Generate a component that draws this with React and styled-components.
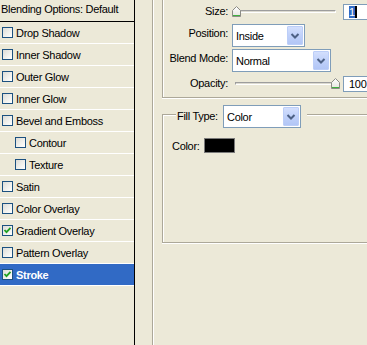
import React from 'react';
import styled, { createGlobalStyle } from 'styled-components';

const Global = createGlobalStyle`
  html, body { margin: 0; padding: 0; background: #ECE9D8; }
  body {
    width: 367px; height: 345px; overflow: hidden;
    font-family: "Liberation Sans", Arial, sans-serif;
    font-size: 11px; color: #000;
    letter-spacing: -0.3px;
  }
`;

const GRAY = '#ACA899';

const Window = styled.div`
  display: flex;
  width: 367px;
  height: 345px;
  overflow: hidden;
  background: #ECE9D8;
`;

const StyleList = styled.div`
  width: 134px;
  flex: none;
  border-right: 1px solid #000;
  display: flex;
  flex-direction: column;
`;

const ListHeader = styled.div`
  height: 22px;
  box-sizing: border-box;
  border-bottom: 1px solid #000;
  display: flex;
  align-items: center;
  padding: 0 0 3px 1px;
  white-space: nowrap;
`;

const ListRow = styled.div`
  height: 22px;
  box-sizing: border-box;
  border-bottom: 1px solid #fff;
  display: flex;
  align-items: center;
  gap: 3px;
  padding-left: ${p => (p.$indent ? 15 : 2)}px;
  background: ${p => (p.$selected ? '#316AC5' : 'transparent')};
  color: ${p => (p.$selected ? '#fff' : '#000')};
  font-weight: ${p => (p.$selected ? 'bold' : 'normal')};
  white-space: nowrap;
`;

const CheckBox = styled.span`
  width: 11px;
  height: 11px;
  box-sizing: border-box;
  flex: none;
  border: 1px solid #1C5180;
  background: linear-gradient(135deg, #DCDCD7 0%, #F2F2EE 60%, #FFFFFF 100%);
  display: flex;
  align-items: center;
  justify-content: center;
`;

const Main = styled.div`
  flex: 1;
  padding-left: 17px;
  overflow: hidden;
  display: flex;
`;

const StylesFrame = styled.div`
  width: 300px;
  flex: none;
  border-left: 1px solid ${GRAY};
  box-shadow: inset 1px 0 0 #fff;
  padding-left: 9px;
  display: flex;
  flex-direction: column;
`;

const StructureGroup = styled.div`
  width: 290px;
  height: 98px;
  box-sizing: border-box;
  border-left: 1px solid ${GRAY};
  border-bottom: 1px solid ${GRAY};
  box-shadow: inset 1px 0 0 #fff, 0 1px 0 #fff;
  padding: 3px 0 5px 0;
  display: flex;
  flex-direction: column;
`;

const FieldRow = styled.div`
  display: flex;
  align-items: center;
  height: ${p => p.$h}px;
  margin-top: ${p => p.$mt || 0}px;
  flex: none;
`;

const FieldLabel = styled.span`
  width: 65px;
  flex: none;
  text-align: right;
  margin-right: 4px;
  margin-bottom: ${p => (p.$lift || 0) * 2}px;
  white-space: nowrap;
`;

const SliderBox = styled.div`
  position: relative;
  width: 108px;
  height: 11px;
  flex: none;
  box-sizing: border-box;
  padding: 0 4px 0 3px;
  display: flex;
  align-items: center;
`;

const Track = styled.div`
  flex: 1;
  height: 3px;
  box-sizing: border-box;
  border-top: 1px solid #9D9D9D;
  border-left: 1px solid #9D9D9D;
  border-bottom: 1px solid #fff;
  border-right: 1px solid #fff;
  background: #DCDAD0;
`;

const ThumbWrap = styled.div`
  position: absolute;
  top: 0;
  width: 9px;
  height: 11px;
  display: flex;
`;

const TextBox = styled.div`
  width: 40px;
  height: 16px;
  box-sizing: border-box;
  margin-left: 3px;
  flex: none;
  border: 1px solid #7F9DB9;
  background: #fff;
  display: flex;
  align-items: center;
  padding-left: 5px;
`;

const SelectedText = styled.span`
  background: #316AC5;
  color: #fff;
  line-height: 12px;
  letter-spacing: 0;
`;

const Caret = styled.span`
  width: 2px;
  height: 12px;
  background: #000;
`;

const SelectBox = styled.div`
  width: ${p => p.$w}px;
  height: 23px;
  box-sizing: border-box;
  flex: none;
  border: 1px solid #7F9DB9;
  background: #fff;
  padding: 1px;
  display: flex;
  align-items: stretch;
`;

const SelectValue = styled.span`
  flex: 1;
  display: flex;
  align-items: center;
  padding-left: 2px;
  white-space: nowrap;
`;

const DropButton = styled.span`
  width: 16px;
  flex: none;
  box-sizing: border-box;
  border: 1px solid #BCCEF8;
  border-radius: 1px;
  background: linear-gradient(180deg, #D3DFFD 0%, #C0D1FA 50%, #B2C6F6 100%);
  display: flex;
  align-items: center;
  justify-content: center;
`;

const FillGroup = styled.div`
  width: 290px;
  height: 129px;
  box-sizing: border-box;
  margin-top: 16px;
  border: 1px solid ${GRAY};
  box-shadow: inset 1px 1px 0 #fff, 0 1px 0 #fff;
  display: flex;
  flex-direction: column;
`;

const Legend = styled.div`
  align-self: flex-start;
  height: 23px;
  margin: -10px 0 0 13px;
  padding: 0 6px 0 1px;
  background: #ECE9D8;
  display: flex;
  align-items: center;
`;

const LegendLabel = styled.span`
  width: 41px;
  margin-right: 5px;
  margin-bottom: 2px;
  white-space: nowrap;
`;

const ColorRow = styled.div`
  margin-top: 10px;
  padding-left: 9px;
  display: flex;
  align-items: center;
  gap: 5px;
`;

const ColorLabel = styled.span`
  width: 27px;
  white-space: nowrap;
`;

const Swatch = styled.span`
  width: 31px;
  height: 15px;
  box-sizing: border-box;
  border: 1px solid #7A7A7A;
  background: #000;
`;

const Check = () => (
  <svg width="9" height="9" viewBox="0 0 9 9">
    <polyline points="1.5,4 3.5,6.2 7.5,1.8" fill="none" stroke="#21A121" strokeWidth="1.8" />
  </svg>
);

const Chevron = () => (
  <svg width="10" height="8" viewBox="0 0 10 8">
    <polyline points="1.5,2 5,5.5 8.5,2" fill="none" stroke="#4D6185" strokeWidth="2" />
  </svg>
);

const Thumb = () => (
  <svg width="9" height="11" viewBox="0 0 9 11">
    <defs>
      <linearGradient id="tg" x1="0" y1="0" x2="0" y2="1">
        <stop offset="0" stopColor="#FFFFFF" />
        <stop offset="1" stopColor="#E4E4DE" />
      </linearGradient>
    </defs>
    <path d="M0.5 4.5 L4.5 0.5 L8.5 4.5 V10.5 H0.5 Z" fill="url(#tg)" stroke="#8C8C86" strokeWidth="1" />
    <line x1="1" y1="9.5" x2="8" y2="9.5" stroke="#3FB13F" strokeWidth="1" />
  </svg>
);

const Slider = ({ pct }) => (
  <SliderBox>
    <Track />
    <ThumbWrap style={{ left: `${pct * 99}px` }}>
      <Thumb />
    </ThumbWrap>
  </SliderBox>
);

const Select = ({ w, value }) => (
  <SelectBox $w={w}>
    <SelectValue>{value}</SelectValue>
    <DropButton><Chevron /></DropButton>
  </SelectBox>
);

const items = [
  { label: 'Drop Shadow' },
  { label: 'Inner Shadow' },
  { label: 'Outer Glow' },
  { label: 'Inner Glow' },
  { label: 'Bevel and Emboss' },
  { label: 'Contour', indent: true },
  { label: 'Texture', indent: true },
  { label: 'Satin' },
  { label: 'Color Overlay' },
  { label: 'Gradient Overlay', checked: true },
  { label: 'Pattern Overlay' },
  { label: 'Stroke', checked: true, selected: true },
];

export default function App() {
  return (
    <>
      <Global />
      <Window>
        <StyleList>
          <ListHeader>Blending Options: Default</ListHeader>
          {items.map(it => (
            <ListRow key={it.label} $indent={it.indent} $selected={it.selected}>
              <CheckBox>{it.checked && <Check />}</CheckBox>
              <span>{it.label}</span>
            </ListRow>
          ))}
        </StyleList>
        <Main>
          <StylesFrame>
            <StructureGroup>
              <FieldRow $h={17}>
                <FieldLabel $lift={1}>Size:</FieldLabel>
                <Slider pct={0} />
                <TextBox><SelectedText>1</SelectedText><Caret /></TextBox>
              </FieldRow>
              <FieldRow $h={23} $mt={4}>
                <FieldLabel $lift={3}>Position:</FieldLabel>
                <Select w={73} value="Inside" />
              </FieldRow>
              <FieldRow $h={23} $mt={2}>
                <FieldLabel $lift={3}>Blend Mode:</FieldLabel>
                <Select w={99} value="Normal" />
              </FieldRow>
              <FieldRow $h={17} $mt={3}>
                <FieldLabel $lift={1}>Opacity:</FieldLabel>
                <Slider pct={1} />
                <TextBox>100</TextBox>
              </FieldRow>
            </StructureGroup>
            <FillGroup>
              <Legend>
                <LegendLabel>Fill Type:</LegendLabel>
                <Select w={78} value="Color" />
              </Legend>
              <ColorRow>
                <ColorLabel>Color:</ColorLabel>
                <Swatch />
              </ColorRow>
            </FillGroup>
          </StylesFrame>
        </Main>
      </Window>
    </>
  );
}
